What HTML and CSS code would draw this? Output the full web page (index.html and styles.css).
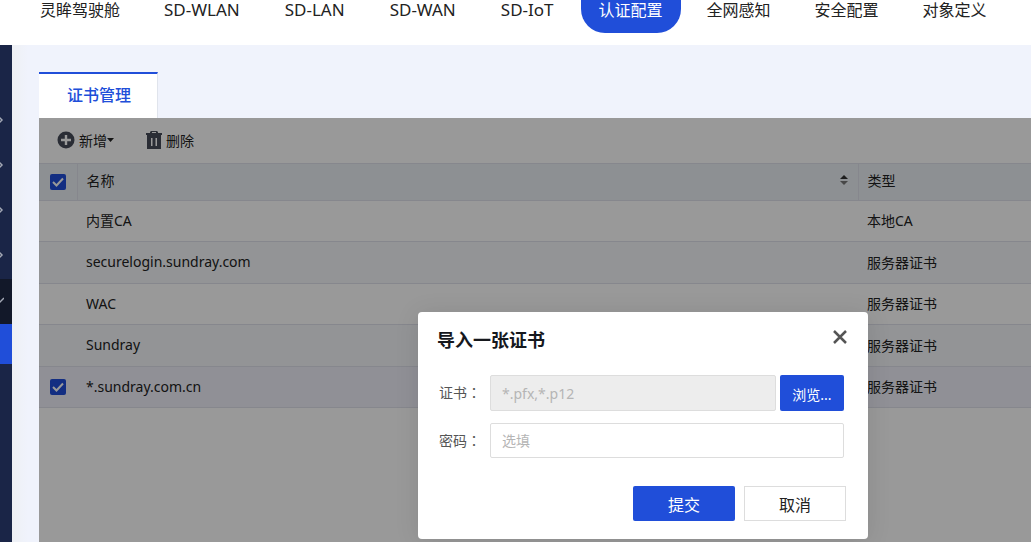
FILE: index.html
```html
<!DOCTYPE html>
<html lang="zh-CN">
  <head>
    <meta charset="UTF-8" />
    <meta name="viewport" content="width=device-width, initial-scale=1.0" />
    <title>证书管理</title>
    <link rel="stylesheet" href="styles.css">
  </head>
  <body>
    <nav class="topnav">
      <a href="#">灵眸驾驶舱</a>
      <a href="#" class="latin">SD-WLAN</a>
      <a href="#" class="latin">SD-LAN</a>
      <a href="#" class="latin">SD-WAN</a>
      <a href="#" class="latin">SD-IoT</a>
      <a href="#" class="active">认证配置</a>
      <a href="#">全网感知</a>
      <a href="#">安全配置</a>
      <a href="#">对象定义</a>
    </nav>
    <div class="page">
      <aside class="sidebar">
        <div class="side-item"><svg width="4" height="8" viewBox="0 0 4 8"><path d="M-1 1l3 3-3 3" /></svg></div>
        <div class="side-item"><svg width="4" height="8" viewBox="0 0 4 8"><path d="M-1 1l3 3-3 3" /></svg></div>
        <div class="side-item"><svg width="4" height="8" viewBox="0 0 4 8"><path d="M-1 1l3 3-3 3" /></svg></div>
        <div class="side-item"><svg width="4" height="8" viewBox="0 0 4 8"><path d="M-1 1l3 3-3 3" /></svg></div>
        <div class="side-item open"><svg width="4" height="8" viewBox="0 0 4 8"><path d="M-3 3l3 3 4-4" /></svg></div>
        <div class="side-current"></div>
      </aside>
      <main class="content">
        <div class="tabs">
          <a href="#" class="tab">证书管理</a>
        </div>
        <section class="panel">
          <div class="toolbar">
            <button type="button" class="tool">
              <svg width="18" height="18" viewBox="0 0 18 18">
                <circle cx="9" cy="9" r="8.5" fill="#464c59" />
                <path d="M9 4v10M4 9h10" stroke="#fff" stroke-width="2.4" />
              </svg>
              <span>新增</span>
              <svg class="caret" width="7" height="4" viewBox="0 0 7 4"><path d="M0 0h7L3.500 4z" fill="#222" /></svg>
            </button>
            <button type="button" class="tool">
              <svg width="16" height="18" viewBox="0 0 16 18">
                <path d="M0 2h4V1l1-1h6l1 1v1h4v2h-1v14H1V4H0z" fill="#464c59" />
                <path d="M6 1h4v1H6zM5 7h1.500v8H5zM9.500 7H11v8H9.500z" fill="#fff" />
              </svg>
              <span>删除</span>
            </button>
          </div>
          <table>
            <thead>
              <tr>
                <th class="check" scope="col"><input type="checkbox" aria-label="全选" checked /></th>
                <th scope="col">
                  <div class="sortable">
                    名称
                    <svg width="8" height="12" viewBox="0 0 8 12">
                      <path d="M0 5l4-4 4 4z" fill="#333" />
                      <path d="M0 7h8l-4 4z" fill="#777" />
                    </svg>
                  </div>
                </th>
                <th class="type" scope="col">类型</th>
              </tr>
            </thead>
            <tbody>
              <tr>
                <td class="check"></td>
                <td>内置CA</td>
                <td>本地CA</td>
              </tr>
              <tr>
                <td class="check"></td>
                <td>securelogin.sundray.com</td>
                <td>服务器证书</td>
              </tr>
              <tr>
                <td class="check"></td>
                <td>WAC</td>
                <td>服务器证书</td>
              </tr>
              <tr>
                <td class="check"></td>
                <td>Sundray</td>
                <td>服务器证书</td>
              </tr>
              <tr class="selected">
                <td class="check"><input type="checkbox" aria-label="*.sundray.com.cn" checked /></td>
                <td>*.sundray.com.cn</td>
                <td>服务器证书</td>
              </tr>
            </tbody>
          </table>
          <div class="mask">
            <form class="dialog" role="dialog" aria-labelledby="dialog-title">
              <div class="dialog-head">
                <h2 id="dialog-title">导入一张证书</h2>
                <button type="button" class="close" aria-label="关闭">
                  <svg width="14" height="14" viewBox="0 0 14 14"><path d="M1 1l12 12M13 1L1 13" /></svg>
                </button>
              </div>
              <div class="field">
                <label for="cert">证书<span class="colon" lang="zh-TW">：</span></label>
                <input id="cert" class="readonly" type="text" placeholder="*.pfx,*.p12" readonly />
                <button type="button" class="browse">浏览...</button>
              </div>
              <div class="field">
                <label for="pwd">密码<span class="colon" lang="zh-TW">：</span></label>
                <input id="pwd" type="password" placeholder="选填" />
              </div>
              <div class="actions">
                <button type="submit" class="submit">提交</button>
                <button type="button" class="cancel">取消</button>
              </div>
            </form>
          </div>
        </section>
      </main>
    </div>
  </body>
</html>
```
FILE: styles.css
```css
* {
  box-sizing: border-box;
}
body {
  margin: 0;
  height: 100vh;
  display: flex;
  flex-direction: column;
  overflow: hidden;
  background: #f0f3fc;
  color: #222;
  font-family: "Noto Sans", "Noto Sans CJK SC", sans-serif;
  font-size: 14px;
}
button,
input {
  font: inherit;
}
a {
  color: inherit;
  text-decoration: none;
}
.topnav {
  display: flex;
  align-items: flex-start;
  gap: 8px;
  height: 45px;
  flex: none;
  padding-left: 22px;
  background: #fff;
  font-size: 16px;
  white-space: nowrap;
}
.topnav a {
  height: 33px;
  padding: 0 18px;
  line-height: 20px;
}
.topnav .latin {
  padding-right: 19px;
  font-size: 17px;
}
.topnav .active {
  background: #204ed9;
  color: #fff;
  border-radius: 0 0 24px 24px;
}

.page {
  flex: 1;
  display: flex;
  min-height: 0;
}
.sidebar {
  width: 12px;
  flex: none;
  padding-top: 54px;
  background: #1a2547;
}
.side-item {
  height: 45px;
  display: flex;
  align-items: center;
  padding-bottom: 3px;
}
.side-item path {
  fill: none;
  stroke: #a3a8b5;
  stroke-width: 1.5;
}
.side-item.open {
  background: #121829;
}
.side-current {
  height: 40px;
  background: #204ed9;
}
.content {
  flex: 1;
  display: flex;
  flex-direction: column;
  padding: 27px 0 0 27px;
  background: linear-gradient(to right, #eef0f4, #f0f3fc 16px);
}
.tabs {
  display: flex;
}
.tab {
  height: 46px;
  padding: 0 26px 0 28px;
  border-top: 2px solid #204ed9;
  border-right: 1px solid #e0e4ec;
  background: #fff;
  color: #204ed9;
  font-size: 16px;
  font-weight: 500;
  line-height: 43px;
}

.panel {
  flex: 1;
  position: relative;
  background: #fff;
}
.toolbar {
  height: 45px;
  display: flex;
  align-items: center;
  gap: 32px;
  padding: 0 0 2px 18px;
}
.tool {
  display: flex;
  align-items: center;
  gap: 4px;
  padding: 0;
  border: 0;
  background: none;
  color: #222;
}
.tool .caret {
  margin-left: -4px;
}
table {
  width: 100%;
  border-collapse: collapse;
  table-layout: fixed;
}
tr {
  height: 41px;
  border-bottom: 1px solid #dfe2ec;
}
thead tr {
  height: 37px;
  background: #ebf1f5;
  border-top: 1px solid #dfe2ec;
}
tbody tr:nth-child(even) {
  height: 42px;
  background: #f5f7fa;
}
tbody .selected {
  background: #f0f1fa;
}
th,
td {
  padding: 0 10px 2px 9px;
  font-weight: 400;
  text-align: left;
}
th {
  padding-bottom: 4px;
  border-right: 1px solid #dfe2ec;
}
th:last-child {
  border-right: 0;
}
.check {
  width: 38px;
  padding: 0 0 4px;
  text-align: center;
}
.type {
  width: 173px;
}
.sortable {
  display: flex;
  justify-content: space-between;
  align-items: center;
}
input[type="checkbox"] {
  appearance: none;
  width: 16px;
  height: 16px;
  margin: 0;
  vertical-align: middle;
  border-radius: 2px;
  background: #204ed9 url("data:image/svg+xml,%3Csvg xmlns='http://www.w3.org/2000/svg' viewBox='0 0 16 16'%3E%3Cpath d='M3 8l3.500 3.500L13 4.500' fill='none' stroke='%23fff' stroke-width='2'/%3E%3C/svg%3E");
}

.mask {
  position: absolute;
  inset: 0;
  background: rgba(0, 0, 0, 0.4);
}
.dialog {
  position: absolute;
  top: 194px;
  left: 379px;
  width: 450px;
  padding: 14px 24px 18px 19px;
  border-radius: 4px;
  background: #fff;
  box-shadow: 0 2px 24px rgba(0, 0, 0, 0.1);
}
.dialog-head {
  display: flex;
  justify-content: space-between;
  align-items: center;
  margin-bottom: 21px;
}
h2 {
  margin: 0;
  font-size: 18px;
  line-height: 28px;
  color: #16181d;
}
.close {
  display: flex;
  padding: 0;
  margin: 0 -3px 6px 0;
  border: 0;
  background: none;
}
.close path {
  stroke: #555;
  stroke-width: 2.5;
}
.field {
  display: flex;
  gap: 4px;
  margin-bottom: 12px;
  line-height: 35px;
}
.field label {
  width: 49px;
  padding-left: 2px;
  color: #555;
}
.colon {
  font-family: "Noto Sans CJK TC", sans-serif;
}
.field input {
  flex: 1;
  min-width: 0;
  height: 35px;
  padding: 0 11px;
  border: 1px solid #ddd;
  border-radius: 2px;
  outline: 0;
}
.field .readonly {
  height: 36px;
  background: #ededed;
}
.field input::placeholder {
  color: #b5b5b5;
}
.browse,
.submit {
  border: 0;
  border-radius: 2px;
  background: #204ed9;
  color: #fff;
}
.browse {
  width: 64px;
  height: 36px;
  padding: 2px 0 0;
}
.actions {
  display: flex;
  justify-content: flex-end;
  gap: 9px;
  margin: 28px -2px 0 0;
}
.actions button {
  width: 102px;
  height: 35px;
  font-size: 16px;
}
.cancel {
  border: 1px solid #ddd;
  background: #fff;
  color: #222;
}
```
